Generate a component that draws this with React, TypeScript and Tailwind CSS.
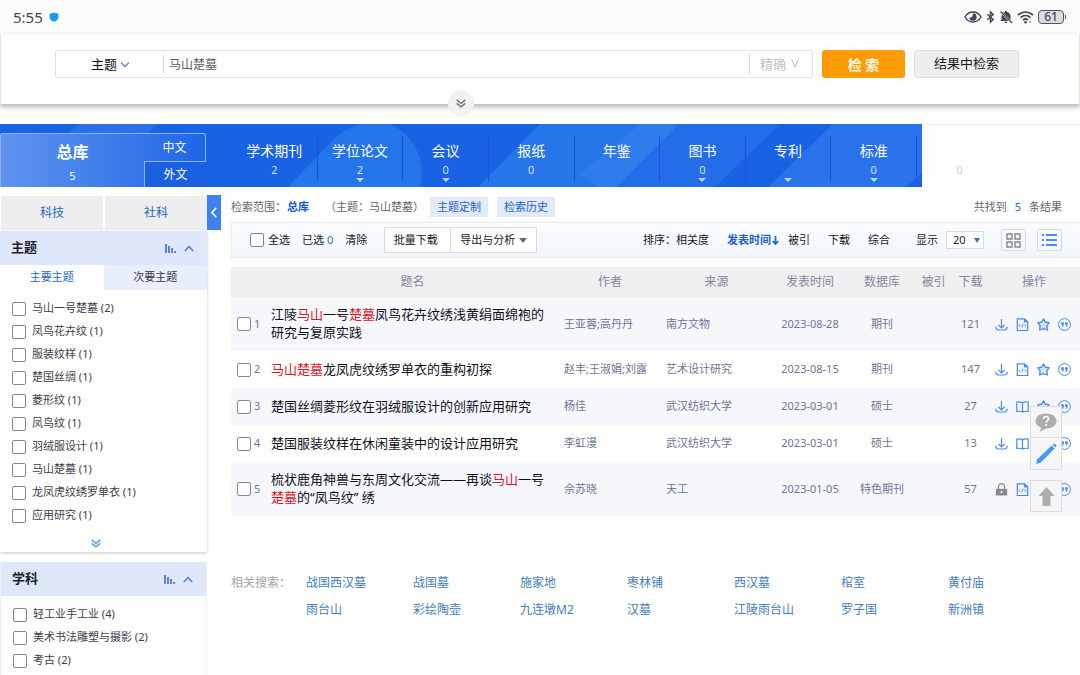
import { useState } from "react";
import type { ReactNode } from "react";

const TABS: { name: string; count: string; more: boolean }[] = [
  { name: "学术期刊", count: "2", more: false },
  { name: "学位论文", count: "2", more: true },
  { name: "会议", count: "0", more: true },
  { name: "报纸", count: "0", more: false },
  { name: "年鉴", count: "", more: false },
  { name: "图书", count: "0", more: true },
  { name: "专利", count: "", more: true },
  { name: "标准", count: "0", more: true },
];

const THEMES = [
  "马山一号楚墓 (2)", "凤鸟花卉纹 (1)", "服装纹样 (1)", "楚国丝绸 (1)", "菱形纹 (1)",
  "凤鸟纹 (1)", "羽绒服设计 (1)", "马山楚墓 (1)", "龙凤虎纹绣罗单衣 (1)", "应用研究 (1)",
];

const SUBJECTS = ["轻工业手工业 (4)", "美术书法雕塑与摄影 (2)", "考古 (2)"];

const RELATED = [
  "战国西汉墓", "战国墓", "施家地", "枣林铺", "西汉墓", "棺室", "黄付庙",
  "雨台山", "彩绘陶壶", "九连墩M2", "汉墓", "江陵雨台山", "罗子国", "新洲镇",
];

// matched keywords are wrapped in square brackets
const ROWS = [
  { title: "江陵[马山]一号[楚墓]凤鸟花卉纹绣浅黄绢面绵袍的研究与复原实践", author: "王亚蓉;高丹丹", source: "南方文物", date: "2023-08-28", db: "期刊", downloads: 121, locked: false, book: false },
  { title: "[马山楚墓]龙凤虎纹绣罗单衣的重构初探", author: "赵丰;王淑娟;刘露", source: "艺术设计研究", date: "2023-08-15", db: "期刊", downloads: 147, locked: false, book: false },
  { title: "楚国丝绸菱形纹在羽绒服设计的创新应用研究", author: "杨佳", source: "武汉纺织大学", date: "2023-03-01", db: "硕士", downloads: 27, locked: false, book: true },
  { title: "楚国服装纹样在休闲童装中的设计应用研究", author: "李虹漫", source: "武汉纺织大学", date: "2023-03-01", db: "硕士", downloads: 13, locked: false, book: true },
  { title: "梳状鹿角神兽与东周文化交流——再谈[马山]一号[楚墓]的“凤鸟纹” 绣", author: "佘苏晓", source: "天工", date: "2023-01-05", db: "特色期刊", downloads: 57, locked: true, book: false },
];

const CHECKBOX = "size-[14px] shrink-0 appearance-none rounded-[2px] border border-[#85869a] bg-white checked:bg-[#2f7bea]";

function Title({ text }: { text: string }) {
  return (
    <>
      {text.split(/[[\]]/).map((part, i) => (i % 2 ? <span key={i} className="text-[#dc1428]">{part}</span> : part))}
    </>
  );
}

function Chevron({ className, d = "M1 1.5 5 5.5 9 1.5" }: { className: string; d?: string }) {
  return (
    <svg viewBox="0 0 10 7" fill="none" stroke="currentColor" strokeWidth="1.7" className={className}>
      <path d={d} />
    </svg>
  );
}

function DoubleChevron({ className }: { className: string }) {
  return (
    <svg viewBox="0 0 10 9" fill="none" stroke="currentColor" strokeWidth="1.5" className={className}>
      <path d="M.7.8 5 4.3 9.3.8M.7 4.3 5 7.8 9.3 4.3" />
    </svg>
  );
}

function StatusBar() {
  return (
    <div className="flex h-[34px] items-center bg-[#fbfbfb] pr-[14px] pl-[13px] text-[#44465a]">
      <span className="text-[15px]">5:55</span>
      <svg viewBox="0 0 10 10" className="ml-[6px] size-[10px]">
        <path d="M5 .4 9.4 1.7v3.2C9.4 7.400 7.500 9 5 9.700 2.500 9 .6 7.400.6 4.900V1.700z" fill="#139df2" />
      </svg>
      <div className="ml-auto flex items-center gap-[4px]">
        <svg viewBox="0 0 18 14" className="h-[14px] w-[18px]" fill="none" stroke="currentColor" strokeWidth="1.5">
          <path d="M1 7C3 3.500 5.700 2 9 2s6 1.500 8 5c-2 3.500-4.700 5-8 5S3 10.500 1 7z" />
          <path d="M9 3.300A3.700 3.700 0 1 1 5.300 7.400c1.700.6 4-.8 3.700-4.100z" fill="currentColor" stroke="none" />
        </svg>
        <svg viewBox="0 0 10 14" className="h-[14px] w-[9px]" fill="none" stroke="currentColor" strokeWidth="1.600">
          <path d="M1.500 4 8 9.700 5 12.700V1.300L8 4.300 1.500 10" />
        </svg>
        <svg viewBox="0 0 14 14" className="size-[14px]" fill="currentColor">
          <path d="M7 1c-.7 0-1.100.4-1.100 1-.6.1-1.200.4-1.700.8l7.300 7.400V6.200C11.500 4 10.200 2.400 8.100 2c0-.6-.4-1-1.100-1zM3 4.500c-.3.600-.5 1.200-.5 1.900v3.100L1.300 11h8.200zM5.500 11.800c.1.800.7 1.400 1.500 1.400s1.400-.6 1.500-1.400z" />
          <path d="m1.500 1.500 11.500 11.500" stroke="currentColor" strokeWidth="1.300" />
        </svg>
        <svg viewBox="0 0 17 14" className="h-[14px] w-[17px]" fill="none" stroke="currentColor" strokeWidth="1.700">
          <path d="M1 5c4.500-4 10.500-4 15 0M3.500 7.600c3-2.600 7-2.600 10 0M6 10c1.500-1.200 3.500-1.200 5 0" />
          <circle cx="8.500" cy="12.200" r="1.300" fill="currentColor" stroke="none" />
          <circle cx="13" cy="12" r=".9" fill="currentColor" stroke="none" opacity=".6" />
        </svg>
        <div className="flex items-center">
          <span className="flex h-[14px] w-[26px] items-center justify-center rounded-[4px] border border-[#50526a] bg-[#dcdce0] text-[12px] leading-none font-medium">61</span>
          <span className="ml-[1px] h-[4px] w-[1px] bg-[#50526a]" />
        </div>
      </div>
    </div>
  );
}

function SearchPanel() {
  const [query, setQuery] = useState("马山楚墓");
  return (
    <form className="relative flex h-[70px] gap-[9px] border-x border-[#e4e4e6] bg-[#fefefd] pt-[16px] pr-[60px] pl-[54px] shadow-[0_3px_5px_rgba(0,0,0,0.28)]" onSubmit={e => e.preventDefault()}>
      <div className="flex h-[28px] flex-1 items-center rounded-[2px] border border-[#dfe1ee]">
        <div className="relative flex h-[20px] w-[107px] items-center">
          <select aria-label="检索字段" className="h-[20px] w-full appearance-none bg-transparent pl-[35px] text-[13px] leading-[18px] text-[#111]">
            <option>主题</option>
          </select>
          <Chevron className="pointer-events-none absolute top-[7px] left-[64px] h-[7px] w-[10px] text-[#7495cf]" />
        </div>
        <input aria-label="检索词" value={query} onChange={e => setQuery(e.target.value)} className="h-[19px] min-w-0 flex-1 border-l border-[#d5d7e6] pl-[5px] text-[12px] leading-[16px] text-[#5a5c66] outline-none" />
        <div className="relative flex h-[20px] w-[63px] items-center border-l border-[#d5d7e6]">
          <select aria-label="匹配方式" className="h-[20px] w-full appearance-none bg-transparent pl-[10px] text-[13px] leading-[18px] text-[#bfc2cc]">
            <option>精确</option>
          </select>
          <svg viewBox="0 0 8 9" fill="none" stroke="currentColor" className="pointer-events-none absolute top-[5px] left-[41px] h-[9px] w-[8px] text-[#b4b7c4]">
            <path d="M.7.500 4 8 7.300.5" />
          </svg>
        </div>
      </div>
      <button type="submit" className="h-[28px] w-[83px] rounded-[3px] bg-[#ff9b06] text-[14px] font-bold text-[#fff9e6]">检 索</button>
      <button type="button" className="h-[28px] w-[105px] rounded-[3px] border border-[#dddde4] bg-[#eeeeef] text-[13px] text-[#1c1c28]">结果中检索</button>
      <button type="button" aria-label="展开" className="absolute top-[56px] left-[447px] z-10 flex size-[26px] items-center justify-center rounded-full bg-[#f1f1f2] text-[#777]">
        <DoubleChevron className="h-[9px] w-[10px]" />
      </button>
    </form>
  );
}

function Banner() {
  return (
    <nav className="mt-[20px] flex h-[63px]">
      <div className="relative flex-1">
        <svg viewBox="0 0 922 63" preserveAspectRatio="none" className="absolute inset-0 size-full">
          <rect width="922" height="63" fill="#1a62e4" />
          <path d="M78 0H158L92 63H15z" fill="#2a70e8" />
          <path d="M288 63 335 14C345 5 355 1 364 0H390C416 12 426 38 420 63z" fill="#2575ea" />
          <path d="M540 0H679L617 63H478z" fill="#2676ea" />
          <path d="M679 0H780L715 63H617z" fill="#236de8" />
          <path d="M640 0H679L617 63H600L580 50z" fill="#2f7cec" />
          <path d="M833 0H922V49L906 63H768z" fill="#2a72ea" />
        </svg>
        <div className="relative flex h-full">
          <div className="mt-[9px] flex w-[206px] text-white">
            <a href="#all" className="flex flex-1 flex-col items-center rounded-tl-[3px] border-t border-l border-[#8fb4f4] bg-gradient-to-r from-[#5e94ef] to-[#3374e8]">
              <span className="mt-[6px] text-[16px] leading-[24px] font-bold">总库</span>
              <span className="mt-[5px] text-[11px] leading-[14px]">5</span>
            </a>
            <div className="flex w-[62px] flex-col text-center text-[12px]">
              <a href="#cn" className="h-[28px] rounded-tr-[3px] border-t border-r border-[#8fb4f4] bg-gradient-to-r from-[#3374e8] to-[#1f66e4] leading-[27px]">中文</a>
              <a href="#en" className="h-[26px] border-t border-l border-[#8fb4f4] bg-[#1a60e0] leading-[25px]">外文</a>
            </div>
          </div>
          <div className="ml-[26px] grid flex-1 grid-cols-8 pr-[5px]">
            {TABS.map(t => (
              <a key={t.name} href="#tab" className="my-[12px] flex flex-col items-center border-r border-[#1557d2] text-white">
                <span className="mt-[3px] text-[14px] leading-[23px]">{t.name}</span>
                <span className="h-[16px] text-[11px] leading-[16px] text-[#cfe0fb]">{t.count}</span>
                {t.more && (
                  <svg viewBox="0 0 8 4" className="h-[4px] w-[8px] shrink-0" fill="#b9d2f8">
                    <path d="M0 0H8L4 4z" />
                  </svg>
                )}
              </a>
            ))}
          </div>
        </div>
      </div>
      <div className="w-[158px] border-t border-[#ededf0]">
        <p className="w-[75px] pt-[37px] text-center text-[11px] leading-[16px] text-[#bdd3f5]">0</p>
      </div>
    </nav>
  );
}

function GroupHeader({ name }: { name: string }) {
  return (
    <div className="flex h-[34px] shrink-0 items-center bg-[#dfe8fb] pr-[13px] pl-[11px] text-[#5e84c6]">
      <h2 className="text-[13px] font-bold text-[#20222e]">{name}</h2>
      <svg viewBox="0 0 11 9" className="ml-auto h-[9px] w-[11px]" fill="currentColor">
        <path d="M0 0h2v9H0zM3 2h2v7H3zM6 4h2v5H6zM9 7h2v2H9z" />
      </svg>
      <Chevron className="ml-[8px] h-[7px] w-[10px]" d="M.8 6 5 1.500 9.200 6" />
    </div>
  );
}

function FilterList({ items }: { items: string[] }) {
  return (
    <ul className="pt-[7px] pl-[12px] text-[11px] text-[#3c3e4a]">
      {items.map(item => (
        <li key={item}>
          <label className="flex h-[23px] items-center gap-[6px]">
            <input type="checkbox" className={CHECKBOX} />
            {item}
          </label>
        </li>
      ))}
    </ul>
  );
}

function Sidebar() {
  return (
    <aside className="flex w-[207px] shrink-0 flex-col pt-[9px]">
      <div className="grid grid-cols-2 gap-[2px] pl-[1px] text-[12px] text-[#2468c8]">
        <button className="h-[34px] bg-[#eeeeef]">科技</button>
        <button className="h-[34px] bg-[#eeeeef]">社科</button>
      </div>
      <section className="mt-px shadow-[0_1px_3px_rgba(0,0,0,0.22)]">
        <GroupHeader name="主题" />
        <div className="grid grid-cols-2 text-[11px]">
          <button className="h-[25px] text-[#2468c0]">主要主题</button>
          <button className="h-[25px] bg-[#e8effc] text-[#33343f]">次要主题</button>
        </div>
        <FilterList items={THEMES} />
        <button aria-label="更多" className="flex h-[25px] w-[192px] items-center justify-center pt-[7px] text-[#5a9af2]">
          <DoubleChevron className="h-[9px] w-[10px]" />
        </button>
      </section>
      <section className="mt-[10px] flex-1 border-x border-[#f0f0f4]">
        <GroupHeader name="学科" />
        <FilterList items={SUBJECTS} />
      </section>
    </aside>
  );
}

function Toolbar() {
  return (
    <div className="mt-[5px] flex h-[36px] items-center border-y border-l border-[#e3eaf2] bg-gradient-to-b from-[#fafcfd] to-[#f2f6fb] pr-[18px] pl-[18px] text-[11px] whitespace-nowrap text-[#181822]">
      <label className="flex items-center gap-[4px]">
        <input type="checkbox" className={CHECKBOX} />
        全选
      </label>
      <span className="ml-[12px]">已选 <span className="text-[#2d70c8]">0</span></span>
      <button className="ml-[12px]">清除</button>
      <div className="ml-[17px] flex h-[26px] border border-[#dadbe2] bg-white">
        <button className="w-[66px] border-r border-[#dadbe2] pr-[4px]">批量下载</button>
        <button className="flex w-[85px] items-center justify-center gap-[4px]">
          导出与分析
          <svg viewBox="0 0 8 5" className="h-[5px] w-[8px]" fill="#66687a"><path d="M0 0H8L4 5z" /></svg>
        </button>
      </div>
      <span className="ml-auto">排序：</span>
      <button>相关度</button>
      <button className="ml-[18px] flex items-center gap-[1px] font-bold text-[#1d60d0]">
        发表时间
        <svg viewBox="0 0 7 9" className="h-[9px] w-[7px]" fill="none" stroke="currentColor" strokeWidth="1.700"><path d="M3.500 0v8M.7 5 3.500 8 6.300 5" /></svg>
      </button>
      <button className="ml-[9px]">被引</button>
      <button className="ml-[18px]">下载</button>
      <button className="ml-[18px]">综合</button>
      <label className="ml-[26px] flex items-center gap-[8px]">
        显示
        <span className="relative">
          <select className="block h-[18px] w-[38px] appearance-none border border-[#dcdde4] bg-white pl-[6px] text-[11px] leading-[16px]">
            <option>20</option>
          </select>
          <svg viewBox="0 0 6 5" className="pointer-events-none absolute top-[7px] right-[4px] h-[5px] w-[6px]" fill="#2f70d0"><path d="M0 0H6L3 5z" /></svg>
        </span>
      </label>
      <button aria-label="摘要视图" className="ml-[17px] flex h-[22px] w-[25px] items-center justify-center rounded-[2px] border border-[#d6d9e2]">
        <svg viewBox="0 0 15 15" className="size-[15px]" fill="none" stroke="#85878f" strokeWidth="1.400"><path d="M1 1h5v5H1zM9 1h5v5H9zM1 9h5v5H1zM9 9h5v5H9z" /></svg>
      </button>
      <button aria-label="列表视图" className="ml-[11px] flex h-[22px] w-[25px] items-center justify-center rounded-[2px] border border-[#d6d9e2]">
        <svg viewBox="0 0 15 14" className="h-[14px] w-[15px]" stroke="#4a8cf0" strokeWidth="2"><path d="M0 2h2M4 2h11M0 7h2M4 7h11M0 12h2M4 12h11" /></svg>
      </button>
    </div>
  );
}

function OpIcon({ label, children }: { label: string; children: ReactNode }) {
  return (
    <button aria-label={label}>
      <svg viewBox="0 0 13 13" className="size-[13px]" fill="none" stroke="#4789ee" strokeWidth="1.200">{children}</svg>
    </button>
  );
}

function Operations({ locked, book }: { locked: boolean; book: boolean }) {
  return (
    <div className="flex items-center gap-[8px] pl-[7px]">
      {locked ? (
        <OpIcon label="无权限">
          <path d="M3.500 6V3.600C3.500 1.800 4.800.7 6.500.7s3 1.100 3 2.900V6" stroke="#88888e" />
          <path d="M.8 5.800h11.400v6.700H.8z" fill="#88888e" stroke="none" />
          <circle cx="6.500" cy="9" r="1" fill="#fff" stroke="none" />
        </OpIcon>
      ) : (
        <OpIcon label="下载">
          <path d="M6.500 1v9M3.300 6.800l3.200 3.200 3.200-3.200M.7 8.800c.2 2 1.200 3.200 2.600 3.200h6.400c1.400 0 2.400-1.200 2.600-3.200" />
        </OpIcon>
      )}
      {book ? (
        <OpIcon label="在线阅读">
          <path d="M6.500 2.700C5.500 1.900 3.500 1.800.8 2v9.300c2.700-.2 4.700 0 5.700.8 1-.8 3-1 5.700-.8V2c-2.700-.2-4.700-.1-5.700.7zv9.400" />
        </OpIcon>
      ) : (
        <OpIcon label="HTML阅读">
          <path d="M1.300.800h7.200l3.200 3v8.700H1.300zM8.500.800v3h3.200" />
          <path d="M4.500 6 3 7.500 4.500 9M8.500 6 10 7.500 8.500 9M7.200 5.500 5.800 9.500" strokeWidth=".9" />
        </OpIcon>
      )}
      <OpIcon label="收藏">
        <path d="m6.500.9 1.700 3.100 4 .8-2.300 2.900.5 4.300-3.900-1.300-3.900 1.300.5-4.300L.8 4.800l4-.8z" fill="#d3e3fb" strokeWidth="1.300" strokeLinejoin="round" />
      </OpIcon>
      <OpIcon label="引用">
        <circle cx="6.500" cy="6.500" r="5.900" strokeWidth="1" />
        <path d="M3.300 4.300h2.500v2.400c0 1.300-.7 2-1.900 2.200v-.8c.6-.2.8-.6.8-1.200H3.300zM7.100 4.300h2.500v2.400c0 1.300-.7 2-1.900 2.200v-.8c.6-.2.8-.6.8-1.200H7.100z" fill="#4789ee" stroke="none" />
      </OpIcon>
    </div>
  );
}

function Results() {
  return (
    <table className="mt-[9px] w-full table-fixed text-[11px] text-[#6e7594]">
      <colgroup>
        <col className="w-[37px]" />
        <col />
        <col className="w-[106px]" />
        <col className="w-[107px]" />
        <col className="w-[80px]" />
        <col className="w-[64px]" />
        <col className="w-[39px]" />
        <col className="w-[35px]" />
        <col className="w-[92px]" />
      </colgroup>
      <thead>
        <tr className="h-[30px] bg-[#f0f0f1] text-[12px] whitespace-nowrap text-[#8287a0]">
          <td />
          {["题名", "作者", "来源", "发表时间", "数据库", "被引", "下载", "操作"].map(h => (
            <th key={h} className="font-normal">{h}</th>
          ))}
        </tr>
      </thead>
      <tbody>
        {ROWS.map((r, i) => (
          <tr key={r.title} className="h-[37px] odd:bg-[#f6f7fb]">
            <td className="pl-[6px]">
              <label className="flex items-center gap-[3px]">
                <input type="checkbox" className={CHECKBOX} />
                {i + 1}
              </label>
            </td>
            <td className="pt-[8px] pr-[10px] pb-[10px] pl-[3px] text-[13px] leading-[18px] text-[#10101c]"><a href="#paper"><Title text={r.title} /></a></td>
            <td className="pl-[7px] whitespace-nowrap">{r.author}</td>
            <td className="pl-[3px]">{r.source}</td>
            <td className="text-center">{r.date}</td>
            <td className="text-center">{r.db}</td>
            <td />
            <td className="text-center">{r.downloads}</td>
            <td><Operations locked={r.locked} book={r.book} /></td>
          </tr>
        ))}
      </tbody>
    </table>
  );
}

function FloatingTools() {
  return (
    <div className="fixed top-[406px] right-[18px] w-[32px]">
      <div className="border border-[#dcdce0] bg-[#f6f6f7]">
        <button aria-label="帮助" className="flex h-[31px] w-full items-center justify-center border-b border-[#dcdce0]">
          <svg viewBox="0 0 22 19" className="h-[19px] w-[22px]">
            <path d="M11 .5c6 0 10.500 3 10.500 7.500S17 15.500 11 15.500L5 18.800l1-4.300C2.500 13.300.5 11 .5 8 .5 3.500 5 .5 11 .5z" fill="#adadb0" />
            <path d="M8.500 5.800C8.700 4.200 9.700 3.500 11 3.500c1.500 0 2.600.8 2.600 2.200 0 1.800-2.500 1.900-2.500 4" fill="none" stroke="#fff" strokeWidth="1.600" />
            <circle cx="11" cy="12" r="1.100" fill="#fff" />
          </svg>
        </button>
        <button aria-label="反馈" className="flex h-[31px] w-full items-center justify-center">
          <svg viewBox="0 0 22 22" className="size-[22px]" fill="#489af6">
            <path d="M1 21l1.300-4.800L16.600 2.400 19.700 5.500 5.500 19.800z" />
            <path d="M17.500 1.700l1-.8c1.500-.9 3.600 1.200 2.700 2.600l-.9 1z" />
          </svg>
        </button>
      </div>
      <button aria-label="返回顶部" className="mt-[10px] flex h-[32px] w-full items-center justify-center border border-[#dcdce0] bg-[#f6f6f7]">
        <svg viewBox="0 0 17 19" className="h-[19px] w-[17px]" fill="#adadb0"><path d="M8.500 0 16.500 9H12.500v10h-8V9H.5z" /></svg>
      </button>
    </div>
  );
}

export default function App() {
  return (
    <div className="flex min-h-screen flex-col bg-[#fefefd] font-['Noto_Sans','Noto_Sans_CJK_SC',sans-serif]">
      <StatusBar />
      <SearchPanel />
      <Banner />
      <div className="flex flex-1">
        <Sidebar />
        <button aria-label="收起" className="mt-[8px] flex h-[35px] w-[14px] shrink-0 items-center justify-center bg-[#3d82ee] text-white">
          <svg viewBox="0 0 6 11" className="h-[11px] w-[6px]" fill="none" stroke="currentColor" strokeWidth="1.500"><path d="M5.300.8.900 5.500 5.300 10.200" /></svg>
        </button>
        <main className="min-w-0 flex-1 pt-[10px] pl-[10px]">
          <div className="flex h-[20px] items-center text-[11px] whitespace-nowrap text-[#646672]">
            <span>检索范围：</span>
            <b className="ml-[1px] text-[#1d60c4]">总库</b>
            <span className="ml-[16px]">（主题：马山楚墓）</span>
            <button className="ml-[6px] h-[20px] w-[58px] bg-[#e1eafb] text-[#1f62c0]">主题定制</button>
            <button className="ml-[9px] h-[20px] w-[58px] bg-[#e1eafb] text-[#1f62c0]">检索历史</button>
            <p className="mr-[18px] ml-auto">共找到<span className="mx-[8px] text-[#2468c8]">5</span>条结果</p>
          </div>
          <Toolbar />
          <Results />
          <div className="mt-[53px] flex pr-[25px] text-[12px] leading-[27px]">
            <span className="w-[75px] shrink-0 text-[#a2a3aa]">相关搜索：</span>
            <div className="grid flex-1 grid-cols-7 whitespace-nowrap text-[#4580b6]">
              {RELATED.map(word => <a key={word} href="#related">{word}</a>)}
            </div>
          </div>
        </main>
      </div>
      <FloatingTools />
    </div>
  );
}
